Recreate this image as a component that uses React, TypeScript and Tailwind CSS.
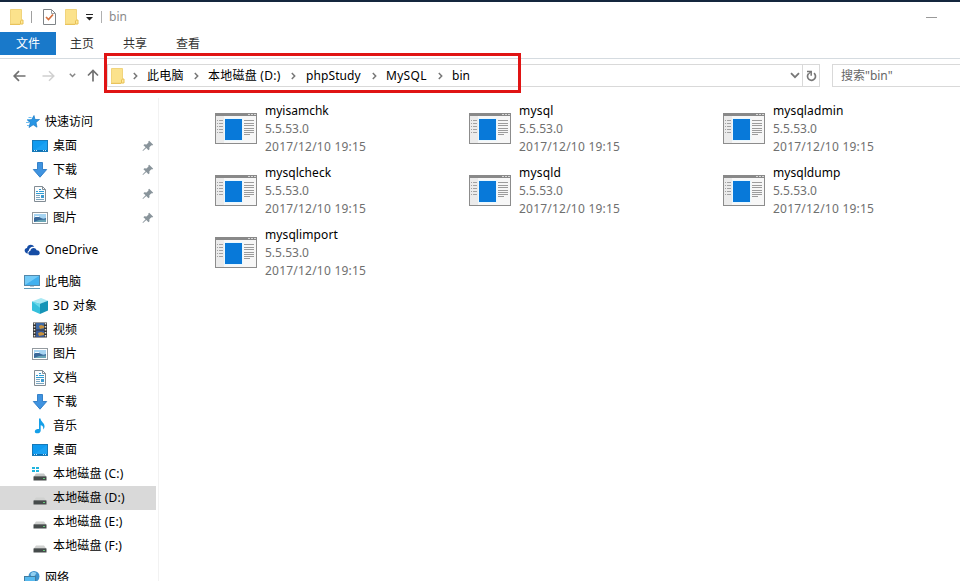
import React from "react";

const DesktopIcon = () => (
  <svg width="16" height="16" viewBox="0 0 16 16">
    <rect x="0.5" y="2.5" width="15" height="11" fill="#0f9bf0" stroke="#1679b8" />
    <path d="M1 13L15 3V13z" fill="#1ba2f3" />
    <path d="M1 12.5H15" stroke="#0b6fb4" />
    <path d="M2 12.5h1M4 12.5h1M11 12.5h1M13 12.5h1" stroke="#c5e8fb" />
  </svg>
);
const DownloadIcon = () => (
  <svg width="16" height="16" viewBox="0 0 16 16">
    <path d="M5.500 0.500h5v7h4.200L8 15.200 1.300 7.500h4.200z" fill="#3f93e0" stroke="#2a79c4" strokeWidth="0.9" />
  </svg>
);
const DocIcon = () => (
  <svg width="16" height="16" viewBox="0 0 16 16">
    <path d="M2.500 0.500h8l3 3v12h-11z" fill="#fbfcfd" stroke="#828c94" />
    <path d="M10.500 0.500v3h3" fill="none" stroke="#828c94" />
    <path d="M4 5.500h2M7 3.500h2M7 5.500h5M4 7.500h8" stroke="#2f9cd4" />
    <path d="M4 9.500h4M4 11.500h4M4 13.500h8" stroke="#7ca6c0" />
    <rect x="9" y="9" width="3" height="3" fill="#3d9bd0" />
  </svg>
);
const PictureIcon = () => (
  <svg width="16" height="16" viewBox="0 0 16 16">
    <rect x="0.500" y="2.500" width="15" height="11" fill="#fff" stroke="#939a9f" />
    <rect x="2" y="4" width="12" height="8" fill="#a6d4f2" />
    <path d="M2 8c3-2 5-1 7 0s3 1 5 0v4H2z" fill="#39689a" />
    <path d="M3 6.500h4" stroke="#f3faff" />
    <path d="M2 12l5-2 7-.5V12z" fill="#69a5b6" />
  </svg>
);
const StarIcon = () => (
  <svg width="16" height="16" viewBox="0 0 16 16">
    <path d="M10 1.500l1 4h4.500l-3.500 2.900 1 4.800-3.800-2.400L5 13.500l1.200-4.700L3.500 6l4.200-.4z" fill="#2795e4" stroke="#1b7ac4" strokeWidth="0.7" />
    <path d="M4.500 3.500h3M3 5.500h2M2 8.500h3M3 11.500h2" stroke="#5fb7ee" strokeWidth="0.900" />
  </svg>
);
const PinIcon = () => (
  <svg width="12" height="12" viewBox="0 0 12 12">
    <path d="M7.200 0.800l4 3.900-1.100.8-.7-.2-2 2 .1 2-1 1L4.300 8 1 11l-.5-.5L3.600 7.300 1.400 5.200l1-.9 2.100.1 2-2-.2-.8z" fill="#89949b" />
  </svg>
);
const CloudIcon = () => (
  <svg width="16" height="16" viewBox="0 0 16 16">
    <path d="M1.500 10.500C-.3 8.500 1 6 3 6 3.500 2.500 8.500 1.500 10.300 5 7 4.300 5 6.500 5 8.500 3.500 9 3.400 10.500 4 11.500 3 11.600 2 11.200 1.500 10.500z" fill="#164da5" />
    <path d="M6.500 13.300c-3.200-.3-2.500-4.300-.2-4.200.3-3.500 5.200-4.200 6.300-.8 3.600-.3 4.300 4.600 1 5z" fill="#164da5" />
  </svg>
);
const MonitorIcon = () => (
  <svg width="16" height="16" viewBox="0 0 16 16">
    <rect x="0.500" y="1.500" width="15" height="10" fill="#3fb0f0" stroke="#5288ab" />
    <path d="M1 11L15 2H1z" fill="#72caf7" />
    <path d="M6 12.500h4" stroke="#afc8d6" />
    <path d="M0 14.500h16" stroke="#5f9ab9" />
  </svg>
);
const CubeIcon = () => (
  <svg width="16" height="16" viewBox="0 0 16 16">
    <path d="M0 3.500L9 0l7 2.800-7 3z" fill="#a9e9f4" />
    <path d="M0 3.500l8 2.300V16l-8-3.500z" fill="#35c0dc" />
    <path d="M8 5.800l8-3v9.700L8 16z" fill="#1594b7" />
    <path d="M0 3.500l8 2.300v4z" fill="#69d9eb" />
  </svg>
);
const VideoIcon = () => (
  <svg width="16" height="16" viewBox="0 0 16 16">
    <rect x="1" y="0.500" width="14" height="15" fill="#343434" />
    <path d="M2.500 1v14M13.500 1v14" stroke="#e1e1dc" strokeWidth="1.500" strokeDasharray="1.500 1.500" />
    <rect x="4" y="1" width="8" height="6.500" fill="#3d69a5" />
    <rect x="4" y="8.500" width="8" height="6.500" fill="#365997" />
    <path d="M7 4l2-1 3 1v2l-4 1zM6 11l3-1 3 1v2l-5 1z" fill="#c7913c" />
  </svg>
);
const MusicIcon = () => (
  <svg width="16" height="16" viewBox="0 0 16 16">
    <path d="M7 .5h1.500C9 4 12.700 5 12.500 8.500c0 1.300-.7 2.200-1.500 3 .8-2.700-.5-4-2.300-4.300v5.600c0 3-5.900 3.600-5.900.6 0-2 2.300-2.900 4.200-2.300z" fill="#159fe8" />
  </svg>
);
const DriveIcon = ({ system = false }: { system?: boolean }) => (
  <svg width="16" height="16" viewBox="0 0 16 16">
    {system && <path d="M0 1h3v2H0zM4 1h3v2H4zM0 4h3v2H0zM4 4h3v2H4z" fill="#20b4de" />}
    <path d="M4 7.500h8l2.500 3.500h-13z" fill={system ? "#c4c7c7" : "#d0d1d0"} />
    <rect x="1.500" y="10.500" width="13" height="4" fill="#464b4b" />
    <path d="M2 10.500h12" stroke="#737777" />
    <path d="M11 12.500h2" stroke="#64c878" />
  </svg>
);
const NetworkIcon = () => (
  <svg width="16" height="16" viewBox="0 0 16 16">
    <circle cx="10" cy="6.500" r="5.500" fill="#3c91cc" />
    <path d="M6.500 4c2-3 4-2 6-1l-2 3-3 1z" fill="#91cff0" />
    <rect x="0.500" y="6.500" width="11" height="7" fill="#56b9ef" stroke="#427da0" />
    <path d="M2 15.500h8" stroke="#5a93b2" />
  </svg>
);
const FolderIcon = ({ className = "" }: { className?: string }) => (
  <svg className={className} width="14" height="16" viewBox="0 0 14 16">
    <path d="M.5.500h11v14.500H.5z" fill="#fbe28c" stroke="#f1d47c" />
    <path d="M10.500 15v-3l1-1h1.500V15z" fill="#ffe99a" stroke="#e8c155" />
    <path d="M0 15.500h10" stroke="#e9c35b" />
  </svg>
);
const AppIcon = () => (
  <svg className="mt-[11px] shrink-0" width="42" height="31" viewBox="0 0 42 31">
    <rect x="0.500" y="0.500" width="41" height="30" fill="#f7f7f7" stroke="#8c8c8c" />
    <rect width="42" height="3" fill="#898989" />
    <path d="M33 1.500h2M36 1.500h2M39 1.500h2" stroke="#d8d8d8" />
    <rect x="1" y="3" width="8" height="27" fill="#ebebeb" />
    <path d="M2 7.500h1M4 7.500h4M2 10.500h1M4 10.500h4M2 13.500h1M4 13.500h4M2 16.500h1M4 16.500h4M2 19.500h1M4 19.500h4" stroke="#a2a2a2" />
    <rect x="9" y="5" width="19" height="23" fill="#e9f8ff" />
    <rect x="10" y="6" width="17" height="21" fill="#0879d9" />
    <path d="M29 7.500h10M29 10.500h10M29 12.500h10M29 15.500h10M29 17.500h10M29 19.500h10M29 21.500h6" stroke="#9c9c9c" />
  </svg>
);
const Chevron = ({ className = "" }: { className?: string }) => (
  <svg className={className} width="5" height="8" viewBox="0 0 5 8">
    <path d="M.8 1l2.900 3L.8 7" fill="none" stroke="#777" strokeWidth="1.500" />
  </svg>
);

type RowProps = { icon: React.ReactNode; label: string; top?: boolean; pinned?: boolean; selected?: boolean; track?: string };
const Row = ({ icon, label, top, pinned, selected, track = "tracking-normal" }: RowProps) => (
  <div className={`flex h-6 w-[156px] shrink-0 items-center ${top ? "pl-6" : "pl-8"} ${selected ? "bg-[#d9d9d9]" : ""}`}>
    <span className="w-4 shrink-0">{icon}</span>
    <span className={`ml-[5px] flex-1 whitespace-nowrap ${track}`}>{label}</span>
    {pinned && <span className="mr-[2px]"><PinIcon /></span>}
  </div>
);

const files = [
  { name: "myisamchk", track: "tracking-normal" },
  { name: "mysql", track: "tracking-[0.2px]" },
  { name: "mysqladmin", track: "tracking-[0.1px]" },
  { name: "mysqlcheck", track: "tracking-[0.05px]" },
  { name: "mysqld", track: "tracking-[0.2px]" },
  { name: "mysqldump", track: "tracking-[0.05px]" },
  { name: "mysqlimport", track: "tracking-[0.1px]" },
];

export default function App() {
  return (
    <div className="flex h-[581px] w-[960px] flex-col overflow-hidden bg-white font-['Noto_Sans','Noto_Sans_CJK_SC',sans-serif] text-[12px] leading-[18px] text-black">
      <header className="flex h-8 shrink-0 items-center border-t-2 border-[#14263e]">
        <FolderIcon className="ml-[10px]" />
        <span className="ml-[7px] h-3 w-px bg-[#a0a0a0]" />
        <svg className="ml-[11px]" width="13" height="16" viewBox="0 0 13 16">
          <path d="M.5.500h8l4 4v11H.5z" fill="#fff" stroke="#7e8387" />
          <path d="M8.500.5v4h4" fill="none" stroke="#9ba0a3" />
          <path d="M3 8l2.500 2.500L10 5.500" fill="none" stroke="#d3703f" strokeWidth="1.700" />
        </svg>
        <FolderIcon className="ml-[9px]" />
        <svg className="ml-[7px]" width="7" height="7" viewBox="0 0 7 7">
          <path d="M0 0h7v1H0zM0 3h7L3.500 6.500z" fill="#222" />
        </svg>
        <span className="ml-[8px] h-3 w-px bg-[#b0b0b0]" />
        <span className="ml-[7px] text-[#8a8a8a]">bin</span>
        <span className="ml-auto mr-[23px] h-px w-[11px] bg-[#999]" />
      </header>

      <nav className="flex h-[27px] shrink-0 border-b border-[#d5dbe0] text-[#333]">
        <span className="flex h-[23px] w-14 items-center justify-center bg-[#1979ca] text-white">文件</span>
        <span className="ml-[14px] flex h-[23px] items-center">主页</span>
        <span className="ml-[29px] flex h-[23px] items-center">共享</span>
        <span className="ml-[29px] flex h-[23px] items-center">查看</span>
      </nav>

      <div className="relative flex h-[39px] shrink-0 pt-[5px]">
        <div className="flex h-[23px] w-[107px] shrink-0 items-center">
          <svg className="ml-[13px]" width="13" height="12" viewBox="0 0 13 12"><path d="M12.500 6H1.500M6 1.200L1.200 6 6 10.800" fill="none" stroke="#717171" strokeWidth="1.700" /></svg>
          <svg className="ml-[16px]" width="13" height="12" viewBox="0 0 13 12"><path d="M.5 6h11M7 1.200L11.800 6 7 10.800" fill="none" stroke="#d0d0d0" strokeWidth="1.500" /></svg>
          <svg className="ml-[14px]" width="7" height="5" viewBox="0 0 7 5"><path d="M.8.8L3.500 3.500 6.200.8" fill="none" stroke="#868686" strokeWidth="1.500" /></svg>
          <svg className="ml-[11px]" width="12" height="13" viewBox="0 0 12 13"><path d="M6 12.500V1.500M1 6.500l5-5 5 5" fill="none" stroke="#717171" strokeWidth="1.700" /></svg>
        </div>
        <div className="flex h-[23px] w-[713px] shrink-0 items-center border border-[#d9d9d9]">
          <FolderIcon className="ml-[3px]" />
          <Chevron className="ml-[8px]" />
          <span className="ml-[9px] w-[47px] tracking-[0.3px]">此电脑</span>
          <Chevron />
          <span className="ml-[9px] w-[83px] whitespace-nowrap tracking-[0.25px]">本地磁盘 (D:)</span>
          <Chevron />
          <span className="ml-[10px] w-[66px] tracking-[0.1px]">phpStudy</span>
          <Chevron />
          <span className="ml-[9px] w-[52px] tracking-[0.3px]">MySQL</span>
          <Chevron />
          <span className="ml-[9px]">bin</span>
          <svg className="ml-auto mr-[2px]" width="10" height="7" viewBox="0 0 10 7"><path d="M1 1.200l4 4 4-4" fill="none" stroke="#777" strokeWidth="1.800" /></svg>
          <span className="flex h-full w-[17px] items-center justify-center border-l border-[#d9d9d9]">
            <svg width="11" height="12" viewBox="0 0 11 12">
              <path d="M2.400 3.800A4 4 0 1 0 8 3.200" fill="none" stroke="#777" strokeWidth="1.700" />
              <path d="M1 1.500H5.200V5.700" fill="none" stroke="#777" strokeWidth="1.500" />
              <path d="M5 1.800L2.400 4" stroke="#777" strokeWidth="1.200" />
            </svg>
          </span>
        </div>
        <div className="ml-[12px] flex h-[23px] flex-1 items-center border border-r-0 border-[#d9d9d9] pl-[8px] text-[#666]">搜索"bin"</div>
        <div className="pointer-events-none absolute left-[104px] top-[-6px] h-10 w-[417px] border-[3px] border-[#e01414]" />
      </div>

      <main className="flex min-h-0 flex-1">
        <aside className="flex w-[159px] shrink-0 flex-col gap-2 overflow-hidden border-r border-[#f2f2f2] pt-3">
          <section className="shrink-0">
            <Row top icon={<StarIcon />} label="快速访问" />
            <Row pinned icon={<DesktopIcon />} label="桌面" />
            <Row pinned icon={<DownloadIcon />} label="下载" />
            <Row pinned icon={<DocIcon />} label="文档" />
            <Row pinned icon={<PictureIcon />} label="图片" />
          </section>
          <section className="shrink-0"><Row top icon={<CloudIcon />} label="OneDrive" /></section>
          <section className="shrink-0">
            <Row top icon={<MonitorIcon />} label="此电脑" />
            <Row icon={<CubeIcon />} label="3D 对象" track="tracking-[0.3px]" />
            <Row icon={<VideoIcon />} label="视频" />
            <Row icon={<PictureIcon />} label="图片" />
            <Row icon={<DocIcon />} label="文档" />
            <Row icon={<DownloadIcon />} label="下载" />
            <Row icon={<MusicIcon />} label="音乐" />
            <Row icon={<DesktopIcon />} label="桌面" />
            <Row icon={<DriveIcon system />} label="本地磁盘 (C:)" track="tracking-[0.15px]" />
            <Row selected icon={<DriveIcon />} label="本地磁盘 (D:)" track="tracking-[0.15px]" />
            <Row icon={<DriveIcon />} label="本地磁盘 (E:)" track="tracking-[0.15px]" />
            <Row icon={<DriveIcon />} label="本地磁盘 (F:)" track="tracking-[0.15px]" />
          </section>
          <section className="shrink-0"><Row top icon={<NetworkIcon />} label="网络" /></section>
        </aside>
        <div className="grid auto-rows-[62px] grid-cols-[254px_254px_190px] content-start pl-14 pt-1">
          {files.map((file) => (
            <div key={file.name} className="flex">
              <AppIcon />
              <div className="ml-2 whitespace-nowrap text-[#707070]">
                <div className={`text-black ${file.track}`}>{file.name}</div>
                <div>5.5.53.0</div>
                <div className="tracking-[0.22px]">2017/12/10 19:15</div>
              </div>
            </div>
          ))}
        </div>
      </main>
    </div>
  );
}
